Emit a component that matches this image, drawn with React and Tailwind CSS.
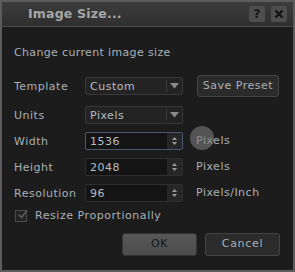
import React from 'react';

const font = { fontFamily: '"DejaVu Sans", Verdana, sans-serif' };

const Arrow = () => (
  <svg width="9" height="6" viewBox="0 0 9 6">
    <path d="M0 0 L9 0 L4.5 5.5 Z" fill="#8a8a8a" />
  </svg>
);

const Select = ({ value }) => (
  <div className="flex h-[18px] w-[98px] items-center rounded-[2px] border border-[#383838] bg-[#232323]">
    <span className="flex-1 pl-[4px] text-[11px] leading-none tracking-[0.5px] text-[#b4bcc4]">{value}</span>
    <div className="h-[12px] w-px bg-[#3c3c3c]" />
    <div className="flex w-[15px] justify-center">
      <Arrow />
    </div>
  </div>
);

const Spin = ({ value, focused }) => (
  <div
    className={`flex h-[18px] w-[98px] items-stretch rounded-[2px] border ${
      focused ? 'border-[#4d5670]' : 'border-[#2e2e2e]'
    } bg-[#141414]`}
  >
    <span className="flex flex-1 items-center pl-[4px] text-[11px] leading-none tracking-[0.5px] text-[#b4bcc4]">
      {value}
    </span>
    <div className="flex w-[15px] flex-col items-center justify-center gap-[2px] bg-[#262626]">
      <svg width="5" height="3" viewBox="0 0 5 3">
        <path d="M0 3 L5 3 L2.5 0 Z" fill="#9a9a9a" />
      </svg>
      <svg width="5" height="3" viewBox="0 0 5 3">
        <path d="M0 0 L5 0 L2.5 3 Z" fill="#9a9a9a" />
      </svg>
    </div>
  </div>
);

const Label = ({ children }) => (
  <span className="w-[71px] text-[11px] leading-none tracking-[0.5px] text-[#a9b0b7]">{children}</span>
);

export default function App() {
  return (
    <div className="relative h-[272px] w-[295px] overflow-hidden" style={font}>
      <div className="flex h-full w-full flex-col border-2 border-[#5c5c5c] bg-[#1c1c1c]">
        {/* title bar */}
        <div className="flex h-[25px] items-center border-b border-[#4a4a4a] bg-gradient-to-b from-[#3c3c3c] to-[#2f2f2f] pl-[26px] pr-[6px]">
          <span className="flex-1 text-[12.5px] font-bold tracking-[0.2px] text-[#a6a6a6]">Image Size...</span>
          <div className="flex gap-[6px]">
            <div className="flex h-[16px] w-[16px] items-center justify-center rounded-[2px] bg-[#4e4e4e] text-[12px] font-bold leading-none text-[#141414]">
              ?
            </div>
            <div className="flex h-[16px] w-[16px] items-center justify-center rounded-[2px] bg-[#4e4e4e]">
              <svg width="10" height="10" viewBox="0 0 10 10">
                <path d="M1.5 1.5 L8.5 8.5 M8.5 1.5 L1.5 8.5" stroke="#141414" strokeWidth="2.4" />
              </svg>
            </div>
          </div>
        </div>

        {/* body */}
        <div className="flex flex-col pl-[12px]">
          <div className="mt-[19px] h-[14px] text-[11px] leading-[14px] tracking-[0.35px] text-[#a9b0b7]">
            Change current image size
          </div>

          <div className="mt-[15px] flex h-[22px] items-center">
            <Label>Template</Label>
            <Select value="Custom" />
            <div className="ml-[14px] flex h-[22px] w-[82px] items-center justify-center rounded-[3px] border border-[#444] bg-[#2b2b2b] text-[11px] tracking-[0.5px] text-[#a9b0b7]">
              Save Preset
            </div>
          </div>

          <div className="mt-[9px] flex h-[18px] items-center">
            <Label>Units</Label>
            <Select value="Pixels" />
          </div>

          <div className="mt-[8px] flex h-[18px] items-center">
            <Label>Width</Label>
            <Spin value="1536" focused />
            <span className="ml-[13px] text-[11px] tracking-[0.5px] text-[#a9b0b7]">Pixels</span>
          </div>

          <div className="mt-[8px] flex h-[18px] items-center">
            <Label>Height</Label>
            <Spin value="2048" />
            <span className="ml-[13px] text-[11px] tracking-[0.5px] text-[#a9b0b7]">Pixels</span>
          </div>

          <div className="mt-[8px] flex h-[18px] items-center">
            <Label>Resolution</Label>
            <Spin value="96" />
            <span className="ml-[13px] text-[11px] tracking-[0.5px] text-[#a9b0b7]">Pixels/Inch</span>
          </div>

          <div className="mt-[7px] flex h-[14px] items-center">
            <div className="relative ml-[1px] h-[12px] w-[12px] border border-[#4a4a4a] bg-[#222]">
              <svg className="absolute -top-[2px] left-[1px]" width="11" height="11" viewBox="0 0 11 11">
                <path d="M1.5 5.5 L4.5 8.5 L10 1.5" stroke="#5a5a5a" strokeWidth="1.6" fill="none" />
              </svg>
            </div>
            <span className="ml-[8px] text-[11px] tracking-[0.55px] text-[#a9b0b7]">Resize Proportionally</span>
          </div>

          <div className="mt-[10px] flex pl-[108px]">
            <div className="flex h-[23px] w-[75px] items-center justify-center rounded-[3px] border border-[#333] bg-gradient-to-b from-[#585858] to-[#4c4c4c] text-[11px] tracking-[0.5px] text-[#161616]">
              OK
            </div>
            <div className="ml-[8px] flex h-[23px] w-[75px] items-center justify-center rounded-[3px] border border-[#444] bg-[#2b2b2b] text-[11px] tracking-[0.7px] text-[#a9b0b7]">
              Cancel
            </div>
          </div>
        </div>
      </div>

      {/* watermark badge */}
      <div className="pointer-events-none absolute left-[190px] top-[126px] h-[24px] w-[24px] rounded-full bg-[#7a7a7a] opacity-60" />
    </div>
  );
}
